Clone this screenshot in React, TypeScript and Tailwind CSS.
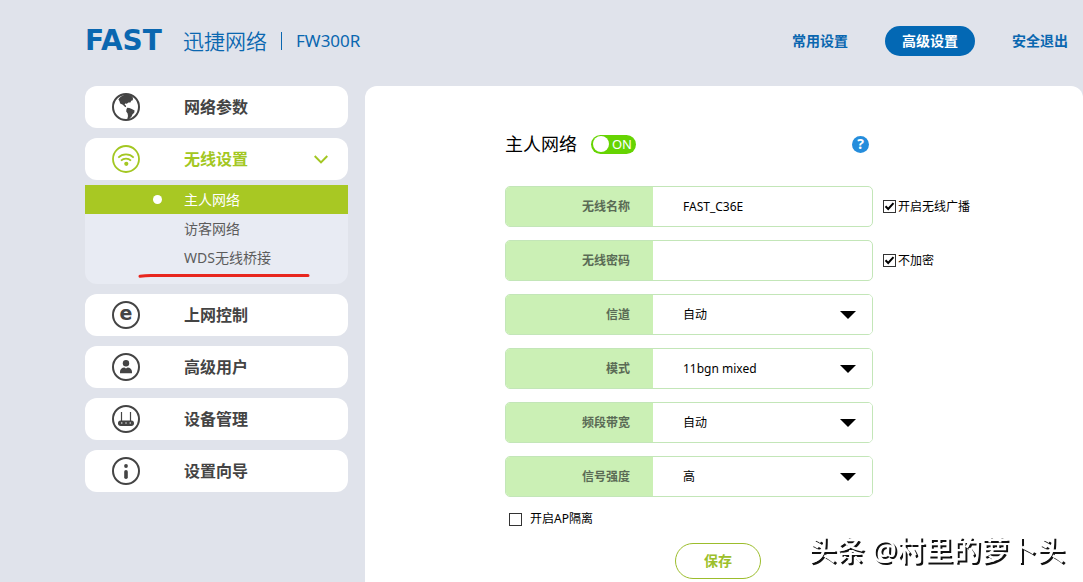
import { useState, type ReactNode } from "react";

const GlobeIcon = () => (
  <svg viewBox="0 0 28 28" className="size-7 shrink-0" fill="none" aria-hidden="true">
    <circle cx="14" cy="14" r="13" stroke="currentColor" strokeWidth="2" />
    <path
      fill="currentColor"
      d="M7.800 4.500 11 2.200l4-.8 4.200 1 1.800 2.400-.2 2.400-1.600.6-.8 1.600-2 .2-1.600 1.200-1.600-.2-.6 1 1.200 1 .4 1.600-1.400-.4-2-2-2.600-1.400-.8-2.400-1-1.400z"
    />
    <path
      fill="currentColor"
      d="m15.200 14.800 2.200.2 2.400 1 2.800 1.600-.4 2.200-1.800 1.600-.8 2.200-2.600 2.600-1.800.2.800-3.400-.4-2.400-1.400-2 .2-2z"
    />
  </svg>
);

const WifiIcon = () => (
  <svg viewBox="0 0 28 28" className="size-7 shrink-0" fill="none" stroke="currentColor" aria-hidden="true">
    <circle cx="14" cy="14" r="13" strokeWidth="1.8" />
    <path d="M6.3 12.6a10.9 10.9 0 0 1 15.4 0" strokeWidth="1.7" />
    <path d="M9 15.6a7.1 7.1 0 0 1 10 0" strokeWidth="1.7" />
    <circle cx="14.3" cy="18.8" r="2.1" fill="currentColor" stroke="none" />
  </svg>
);

const InternetIcon = () => (
  <svg viewBox="0 0 28 28" className="size-7 shrink-0" fill="none" aria-hidden="true">
    <circle cx="14" cy="14" r="13" stroke="currentColor" strokeWidth="2" />
    <text
      x="14"
      y="19"
      textAnchor="middle"
      fontSize="19"
      fill="currentColor"
      className="font-['DejaVu_Sans',sans-serif] font-bold"
    >
      e
    </text>
  </svg>
);

const UserIcon = () => (
  <svg viewBox="0 0 28 28" className="size-7 shrink-0" fill="none" aria-hidden="true">
    <circle cx="14" cy="14" r="13" stroke="currentColor" strokeWidth="2" />
    <circle cx="14" cy="10.3" r="3.2" fill="currentColor" />
    <path d="M8 20.2v-1.4c0-2.6 2-4.2 4.4-4.2l1.6.8 1.6-.8c2.400 0 4.400 1.600 4.400 4.200v1.400z" fill="currentColor" />
  </svg>
);

const RouterIcon = () => (
  <svg viewBox="0 0 28 28" className="size-7 shrink-0" fill="none" aria-hidden="true">
    <circle cx="14" cy="14" r="13" stroke="currentColor" strokeWidth="2" />
    <path d="M9.500 7v9M18.500 7v9" stroke="currentColor" strokeWidth="1.200" />
    <rect x="6" y="15.500" width="16" height="5.500" rx="2.700" fill="currentColor" />
    <g fill="#fff">
      <circle cx="9.800" cy="18" r=".7" />
      <circle cx="14" cy="18" r=".7" />
      <circle cx="18.200" cy="18" r=".7" />
    </g>
  </svg>
);

const InfoIcon = () => (
  <svg viewBox="0 0 28 28" className="size-7 shrink-0" fill="none" aria-hidden="true">
    <circle cx="14" cy="14" r="13" stroke="currentColor" strokeWidth="2" />
    <circle cx="14" cy="9" r="1.900" fill="currentColor" />
    <rect x="12.200" y="13" width="3.600" height="9" rx="1.800" fill="currentColor" />
  </svg>
);

function MenuItem({ icon, label, active = false }: { icon: ReactNode; label: string; active?: boolean }) {
  return (
    <button
      type="button"
      aria-expanded={active}
      className={`flex h-[42px] w-full items-center gap-11 rounded-xl bg-white pr-5 pl-[27px] text-left text-base font-semibold ${
        active ? "text-[#a3c722]" : "text-[#444]"
      }`}
    >
      {icon}
      <span className="flex-1">{label}</span>
      {active && (
        <svg viewBox="0 0 14 9" className="h-[9px] w-3.5" fill="none" stroke="currentColor" strokeWidth="2" aria-hidden="true">
          <path d="M.7 1 7 7.400 13.300 1" />
        </svg>
      )}
    </button>
  );
}

function SubItem({ label, active = false }: { label: string; active?: boolean }) {
  return (
    <a
      href="#"
      className={`flex h-[29px] items-center gap-[22px] pl-[68px] text-sm ${
        active ? "bg-[#a8c823] text-white" : "text-[#5c5c5c]"
      }`}
    >
      <span className={`size-[9px] rounded-full ${active ? "bg-white" : ""}`} />
      {label}
    </a>
  );
}

function Check({ id, label, initial = false, spacing }: { id: string; label: string; initial?: boolean; spacing: string }) {
  const [on, setOn] = useState(initial);
  return (
    <label htmlFor={id} className={`flex items-center text-xs text-black ${spacing}`}>
      <span className="grid">
        <input
          id={id}
          type="checkbox"
          checked={on}
          onChange={() => setOn(!on)}
          className="size-[13px] appearance-none border border-[#333] bg-white [grid-area:1/1]"
        />
        {on && (
          <svg viewBox="0 0 13 13" className="pointer-events-none size-[13px] [grid-area:1/1]" fill="none" aria-hidden="true">
            <path d="M2.500 6.300 5.200 9 10.500 3.200" stroke="#000" strokeWidth="2" />
          </svg>
        )}
      </span>
      {label}
    </label>
  );
}

function Field({ id, label, children, side }: { id: string; label: string; children: ReactNode; side?: ReactNode }) {
  return (
    <div className="flex items-center gap-2.5">
      <div className="flex h-[41px] w-[368px] overflow-hidden rounded-[5px] border border-[#c3e6b8]">
        <label
          htmlFor={id}
          className="flex w-[147px] shrink-0 items-center justify-end bg-[#cbf0b5] pr-[23px] text-xs font-bold text-[#5a6b55]"
        >
          {label}
        </label>
        {children}
      </div>
      {side}
    </div>
  );
}

function SelectField({ id, label, options }: { id: string; label: string; options: string[] }) {
  return (
    <Field id={id} label={label}>
      <div className="grid flex-1 items-center">
        <select id={id} className="h-full w-full appearance-none bg-white pl-[30px] text-xs text-black outline-none [grid-area:1/1]">
          {options.map((o) => (
            <option key={o}>{o}</option>
          ))}
        </select>
        <svg
          viewBox="0 0 16 8"
          className="pointer-events-none mr-4 h-2 w-4 justify-self-end [grid-area:1/1]"
          aria-hidden="true"
        >
          <path d="M0 0h16L8 8z" fill="#000" />
        </svg>
      </div>
    </Field>
  );
}

export default function App() {
  const [enabled, setEnabled] = useState(true);
  return (
    <div className="flex min-h-screen flex-col bg-[#e0e3eb] font-['Noto_Sans','Noto_Sans_CJK_SC',sans-serif]">
      <header className="flex h-[86px] items-center justify-between pr-[15px] pb-1 pl-[85px] text-[#0a67b0]">
        <div className="flex items-center">
          <span className="min-w-[88px] font-['DejaVu_Sans',sans-serif] text-[28px] leading-8 font-bold">FAST</span>
          <span className="ml-2.5 text-[21px] leading-8 font-[350]">迅捷网络</span>
          <span className="mx-3.5 h-[18px] w-px bg-[#0a67b0]" />
          <span className="text-[17px]">FW300R</span>
        </div>
        <nav className="flex items-center gap-[37px] text-sm font-bold">
          <a href="#">常用设置</a>
          <a href="#" className="flex h-[30px] w-[90px] items-center justify-center rounded-full bg-[#0368b4] text-white">
            高级设置
          </a>
          <a href="#">安全退出</a>
        </nav>
      </header>

      <div className="flex flex-1 gap-[17px] pl-[85px]">
        <aside className="flex w-[263px] shrink-0 flex-col gap-2.5">
          <MenuItem icon={<GlobeIcon />} label="网络参数" />
          <div>
            <MenuItem icon={<WifiIcon />} label="无线设置" active />
            <div className="relative mt-[5px] rounded-b-xl bg-[#e8ebf3] pb-3">
              <SubItem label="主人网络" active />
              <SubItem label="访客网络" />
              <SubItem label="WDS无线桥接" />
              <svg
                viewBox="0 0 174 6"
                className="absolute bottom-1.5 left-[52px] h-1.5 w-[174px]"
                fill="none"
                stroke="#e8261e"
                strokeWidth="3"
                strokeLinecap="round"
                aria-hidden="true"
              >
                <path d="M3 4.300Q8 3.500 14 3.500H171" />
              </svg>
            </div>
          </div>
          <MenuItem icon={<InternetIcon />} label="上网控制" />
          <MenuItem icon={<UserIcon />} label="高级用户" />
          <MenuItem icon={<RouterIcon />} label="设备管理" />
          <MenuItem icon={<InfoIcon />} label="设置向导" />
        </aside>

        <main className="flex-1 rounded-t-xl bg-white pt-11 pl-[140px]">
          <form onSubmit={(e) => e.preventDefault()}>
            <div className="flex h-7 w-[368px] items-center">
              <h1 className="text-lg text-black">主人网络</h1>
              <button
                type="button"
                role="switch"
                aria-checked={enabled}
                aria-label="主人网络"
                onClick={() => setEnabled(!enabled)}
                className="ml-3.5 flex h-[19px] w-[45px] items-center justify-between rounded-full bg-[#66d402] pr-1 pl-0.5 text-[13px] leading-none text-white"
              >
                <span className="size-4 rounded-full bg-white" />
                {enabled ? "ON" : ""}
              </button>
              <button
                type="button"
                aria-label="帮助"
                className="mr-1 ml-auto flex size-[17px] items-center justify-center rounded-full bg-[#258ddc] text-sm leading-none font-bold text-white"
              >
                ?
              </button>
            </div>

            <div className="mt-7 flex flex-col gap-[13px]">
              <Field
                id="ssid"
                label="无线名称"
                side={<Check id="broadcast" label="开启无线广播" initial spacing="gap-0.5" />}
              >
                <input
                  id="ssid"
                  type="text"
                  defaultValue="FAST_C36E"
                  className="w-full min-w-0 flex-1 pl-[30px] text-xs text-black outline-none"
                />
              </Field>
              <Field id="password" label="无线密码" side={<Check id="open" label="不加密" initial spacing="gap-0.5" />}>
                <input
                  id="password"
                  type="password"
                  className="w-full min-w-0 flex-1 pl-[30px] text-xs text-black outline-none"
                />
              </Field>
              <SelectField id="channel" label="信道" options={["自动"]} />
              <SelectField id="mode" label="模式" options={["11bgn mixed"]} />
              <SelectField id="bandwidth" label="频段带宽" options={["自动"]} />
              <SelectField id="power" label="信号强度" options={["高"]} />
            </div>

            <div className="mt-3.5 flex pl-1">
              <Check id="isolation" label="开启AP隔离" spacing="gap-2" />
            </div>
            <button
              type="submit"
              className="mt-4 mb-[3px] ml-[170px] h-9 w-[86px] rounded-full border border-[#9cbd2c] text-sm font-bold text-[#9cc02a]"
            >
              保存
            </button>
          </form>
        </main>
      </div>

      <p className="pointer-events-none fixed right-[18px] bottom-4 text-[28px] leading-8 font-medium whitespace-nowrap text-white [text-shadow:2px_2px_0_#111]">
        头条 @村里的萝卜头
      </p>
    </div>
  );
}
